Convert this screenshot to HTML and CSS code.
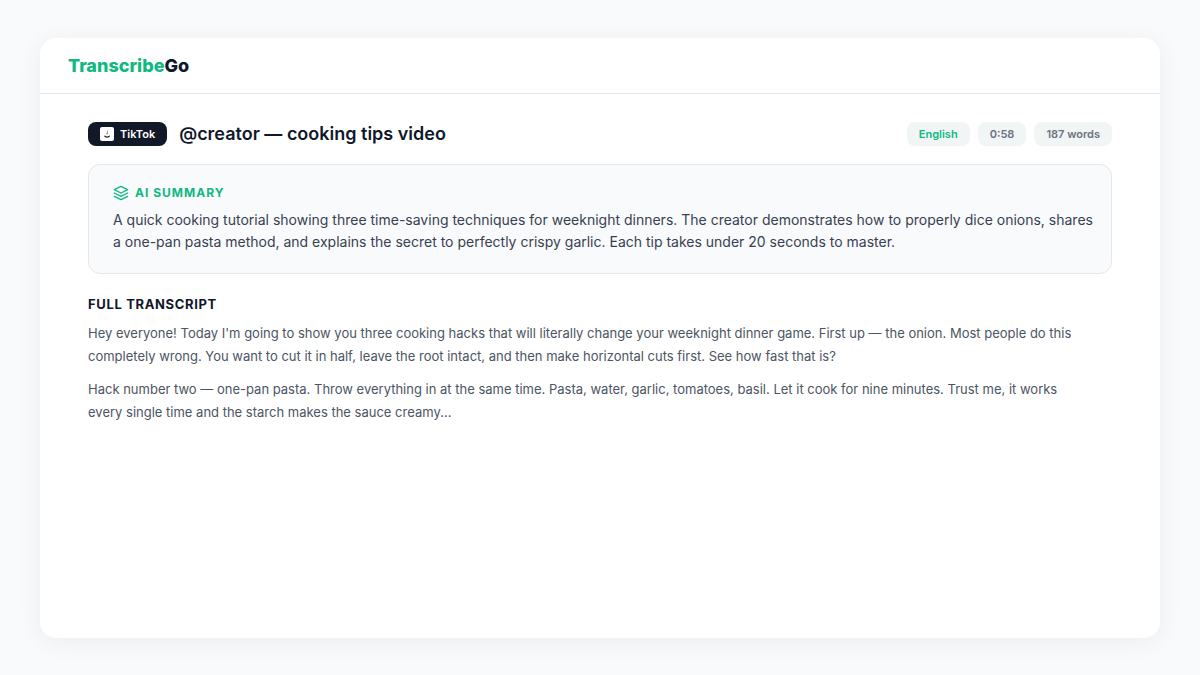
FILE: index.html
```
<!DOCTYPE html>
<html lang="en">
<head>
<meta charset="utf-8">
<meta name="viewport" content="width=device-width, initial-scale=1">
<title>TranscribeGo</title>
<link rel="stylesheet" href="styles.css">
</head>
<body>
<div class="card">
  <header class="topbar"><div class="brand"><span class="brand-accent">Transcribe</span>Go</div></header>
  <main class="content">
    <div class="title-row">
      <span class="source">
        <svg class="source-icon" viewBox="0 0 14 14" aria-hidden="true">
          <rect width="14" height="14" rx="2" fill="#fff"/>
          <path d="M7.5 3.5v4" stroke="#9ca3af" stroke-width="1"/>
          <path d="M4.5 8.8a2.8 2.2 0 0 0 5.2 0" fill="none" stroke="#111827" stroke-width="1.2"/>
          <path d="M6 6.5h1.5" stroke="#9ca3af" stroke-width="1"/>
        </svg>
        TikTok
      </span>
      <h1 class="title">@creator — cooking tips video</h1>
      <div class="tags">
        <span class="tag tag-language">English</span>
        <span class="tag">0:58</span>
        <span class="tag">187 words</span>
      </div>
    </div>
    <section class="summary">
      <h2 class="summary-label">
        <svg class="summary-icon" viewBox="0 0 24 24" aria-hidden="true"><path d="M12 2 2 7l10 5 10-5-10-5zM2 17l10 5 10-5M2 12l10 5 10-5"/></svg>
        AI SUMMARY
      </h2>
      <p class="summary-text">A quick cooking tutorial showing three time-saving techniques for weeknight dinners. The creator demonstrates how to properly dice onions, shares a one-pan pasta method, and explains the secret to perfectly crispy garlic. Each tip takes under 20 seconds to master.</p>
    </section>
    <section class="transcript">
      <h2 class="transcript-title">FULL TRANSCRIPT</h2>
      <p class="transcript-text">Hey everyone! Today I'm going to show you three cooking hacks that will literally change your weeknight dinner game. First up — the onion. Most people do this completely wrong. You want to cut it in half, leave the root intact, and then make horizontal cuts first. See how fast that is?</p>
      <p class="transcript-text">Hack number two — one-pan pasta. Throw everything in at the same time. Pasta, water, garlic, tomatoes, basil. Let it cook for nine minutes. Trust me, it works every single time and the starch makes the sauce creamy...</p>
    </section>
  </main>
</div>
</body>
</html>
```
FILE: styles.css
```
* { box-sizing: border-box; }
body {
  margin: 0;
  min-height: 100vh;
  padding: 38px 40px 37px;
  display: flex;
  background: #f9fafc;
  color: #0f172a;
  font-family: Inter, "Liberation Sans", sans-serif;
}
h1, h2, p { margin: 0; }
.card {
  flex: 1;
  min-width: 0;
  background: #fff;
  border-radius: 16px;
  box-shadow: 0 4px 24px rgba(0, 0, 0, 0.06);
}
.topbar { padding: 16px 28px; border-bottom: 1px solid #e5e7eb; }
.brand { font-size: 18px; line-height: 23px; font-weight: 800; }
.brand-accent { color: #10b981; }
.content { padding: 28px 48px; }
.title-row { display: flex; align-items: center; gap: 12px; margin-bottom: 18px; }
.source, .tag {
  display: flex;
  align-items: center;
  gap: 6px;
  padding: 0 12px;
  font-size: 11px;
  line-height: 24px;
  font-weight: 600;
  border-radius: 8px;
  white-space: nowrap;
}
.source { background: #111827; color: #fff; }
.source-icon { width: 14px; height: 14px; }
.title { font-size: 18px; line-height: 24px; font-weight: 600; }
.tags { display: flex; gap: 8px; margin-left: auto; }
.tag { background: #f1f5f6; color: #6b7280; }
.tag-language { color: #10b981; }
.summary {
  padding: 20px 12px 20px 24px;
  margin-bottom: 22px;
  background: #f9fafc;
  border: 1px solid #e5e7eb;
  border-radius: 12px;
}
.summary-label {
  display: flex;
  align-items: center;
  gap: 6px;
  margin-bottom: 8px;
  font-size: 12px;
  line-height: 16px;
  font-weight: 700;
  letter-spacing: 1px;
  color: #10b981;
}
.summary-icon {
  width: 16px;
  height: 16px;
  fill: none;
  stroke: currentColor;
  stroke-width: 2;
  stroke-linejoin: round;
  stroke-linecap: round;
}
.summary-text { font-size: 14px; line-height: 22px; color: #374151; }
.transcript { padding-right: 24px; }
.transcript-title {
  margin-bottom: 10px;
  font-size: 13px;
  line-height: 16px;
  font-weight: 700;
  letter-spacing: 0.05em;
}
.transcript-text { margin-bottom: 10px; font-size: 13px; line-height: 23px; color: #4b5563; }
```
